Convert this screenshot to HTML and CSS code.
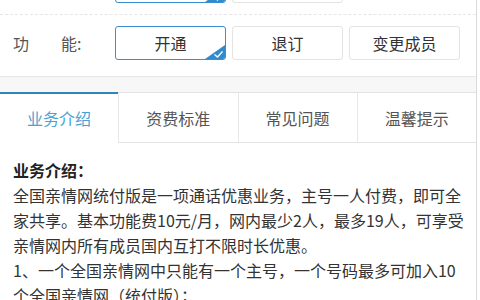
FILE: index.html
```html
<!DOCTYPE html>
<html lang="zh-CN">
<head>
  <meta charset="UTF-8">
  <meta name="viewport" content="width=device-width, initial-scale=1.0">
  <title>全国亲情网</title>
  <link rel="stylesheet" href="styles.css">
</head>
<body>
  <div class="page">
    <!-- row above is scrolled out of view, only the button edges show -->
    <div class="opt-row first">
      <span class="opt-label"></span>
      <div class="opt-btns">
        <button class="opt-btn active"><svg class="tick" width="20" height="14" viewBox="0 0 20 14"><polygon points="20,0 20,14 0,14" fill="#2f8bcf"/><path d="M9.5 9.5 L12.5 12 L17.5 6.5" fill="none" stroke="#fff" stroke-width="1.4"/></svg></button>
        <button class="opt-btn"></button>
      </div>
    </div>
    <div class="opt-row">
      <span class="opt-label">功　　能:</span>
      <div class="opt-btns">
        <button class="opt-btn active">开通<svg class="tick" width="20" height="14" viewBox="0 0 20 14"><polygon points="20,0 20,14 0,14" fill="#2f8bcf"/><path d="M9.5 9.5 L12.5 12 L17.5 6.5" fill="none" stroke="#fff" stroke-width="1.4"/></svg></button>
        <button class="opt-btn">退订</button>
        <button class="opt-btn">变更成员</button>
      </div>
    </div>

    <div class="band"></div>

    <div class="tabs">
      <div class="tab active">业务介绍</div>
      <div class="tab">资费标准</div>
      <div class="tab">常见问题</div>
      <div class="tab">温馨提示</div>
    </div>

    <div class="content">
      <h3>业务介绍：</h3>
      <p>全国亲情网统付版是一项通话优惠业务，主号一人付费，即可全<br>家共享。基本功能费10元/月，网内最少2人，最多19人，可享受<br>亲情网内所有成员国内互打不限时长优惠。</p>
      <p>1、一个全国亲情网中只能有一个主号，一个号码最多可加入10<br>个全国亲情网（统付版）；</p>
    </div>
  </div>
</body>
</html>
```

FILE: styles.css
```css
* {
  box-sizing: border-box;
  margin: 0;
  padding: 0;
}

body {
  background: #fff;
  font-family: "Noto Sans CJK SC", "Noto Sans", sans-serif;
  color: #333;
  overflow: hidden;
}

.page {
  width: 477px;
  height: 342px;
  margin-top: -42px;
  border-right: 1px solid #d9d9d9;
  overflow: hidden;
}

.opt-row {
  display: flex;
  align-items: center;
  padding: 11px 0 16px 13px;
}

.opt-row.first {
  padding-bottom: 11px;
  border-bottom: 1px dashed #e6e6e6;
}

.opt-label {
  width: 102px;
  font-size: 16px;
  color: #555;
}

.opt-btns {
  display: flex;
  gap: 6px;
}

.opt-btn {
  position: relative;
  width: 111px;
  height: 34px;
  background: #fff;
  border: 1px solid #e3e3e3;
  border-radius: 3px;
  overflow: hidden;
  font-family: inherit;
  font-size: 16px;
  color: #333;
}

.opt-btn.active {
  border-color: #3b8fcf;
}

.tick {
  position: absolute;
  right: 0;
  bottom: 0;
  display: block;
}

.band {
  height: 16px;
  background: #f7f7f7;
  border-top: 1px solid #e6e6e6;
}

.tabs {
  display: flex;
}

.tab {
  flex: 1;
  height: 51px;
  display: flex;
  align-items: center;
  justify-content: center;
  font-size: 16px;
  color: #555;
  background: #fff;
  border-top: 1px solid #e3e3e3;
  border-bottom: 1px solid #e3e3e3;
  border-left: 1px solid #e8e8e8;
}

.tab.active {
  border-left: none;
  border-top: 2px solid #2b87ba;
  border-bottom-color: transparent;
  color: #4aa2d2;
}

.content {
  padding: 15px 0 0 13px;
  font-size: 16px;
  line-height: 25px;
  color: #333;
}

.content h3 {
  font-size: 16px;
  font-weight: bold;
  color: #222;
}
```
